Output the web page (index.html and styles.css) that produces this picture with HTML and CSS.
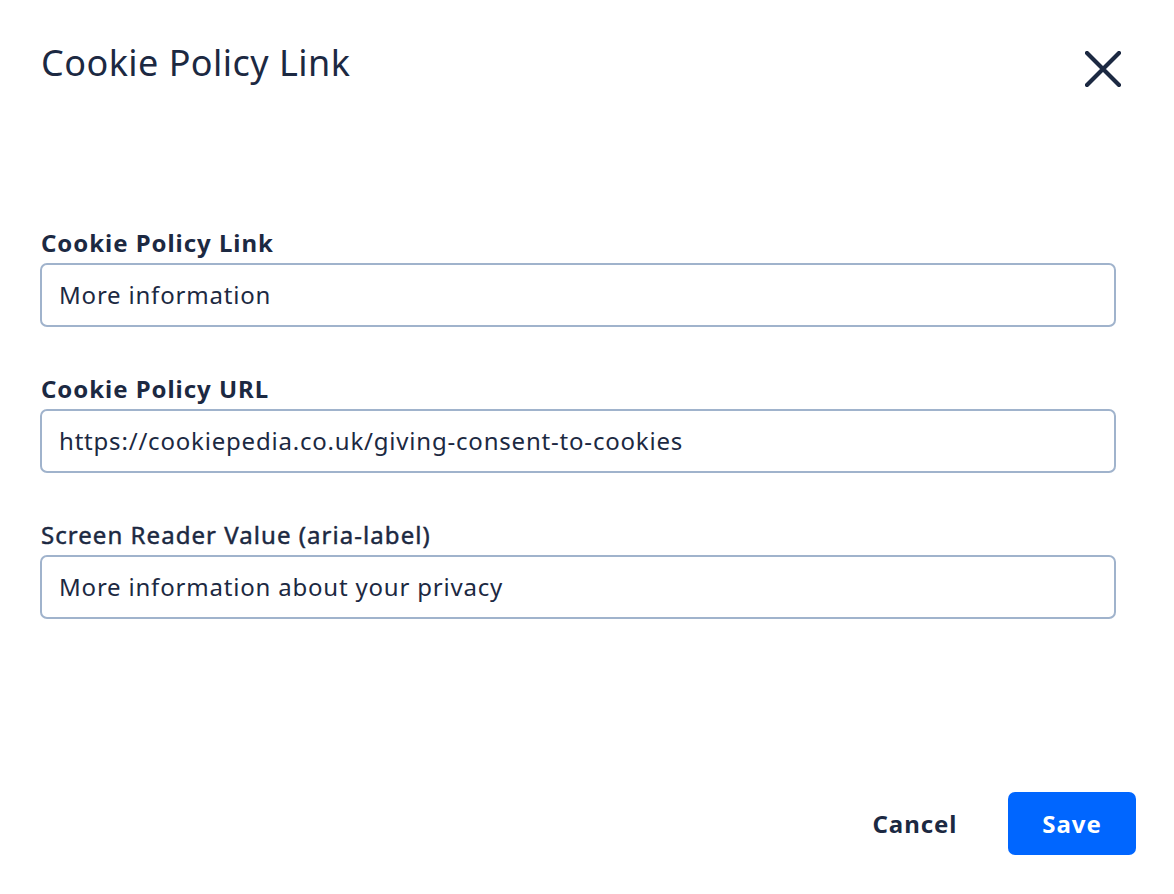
FILE: index.html
```html
<!DOCTYPE html>
<html lang="en">
<head>
<meta charset="utf-8">
<title>Cookie Policy Link</title>
<link rel="stylesheet" href="styles.css">
</head>
<body>
<div class="modal">
  <header class="modal-header">
    <h1 class="modal-title">Cookie Policy Link</h1>
    <button class="close-btn" aria-label="Close">
      <svg width="36" height="36" viewBox="0 0 36 36" fill="none">
        <path d="M2 2L34 34M34 2L2 34" stroke="#1c2942" stroke-width="4.2" stroke-linecap="round"/>
      </svg>
    </button>
  </header>
  <form class="modal-body">
    <div class="field">
      <label class="field-label bold">Cookie Policy Link</label>
      <div class="field-input">More information</div>
    </div>
    <div class="field">
      <label class="field-label bold">Cookie Policy URL</label>
      <div class="field-input">https://cookiepedia.co.uk/giving-consent-to-cookies</div>
    </div>
    <div class="field">
      <label class="field-label medium">Screen Reader Value (aria-label)</label>
      <div class="field-input">More information about your privacy</div>
    </div>
  </form>
  <footer class="modal-footer">
    <button class="btn btn-cancel">Cancel</button>
    <button class="btn btn-save">Save</button>
  </footer>
</div>
</body>
</html>
```
FILE: styles.css
```css
html, body {
  margin: 0;
  padding: 0;
  background: #ffffff;
}
body {
  font-family: "Noto Sans", "Open Sans", sans-serif;
  color: #1c2942;
}
.modal {
  width: 1174px;
  height: 894px;
  box-sizing: border-box;
  display: flex;
  flex-direction: column;
}
.modal-header {
  display: flex;
  justify-content: space-between;
  align-items: flex-start;
  padding: 39px 53px 0 41px;
}
.modal-title {
  margin: 0;
  font-size: 36px;
  line-height: 48px;
  font-weight: 400;
  letter-spacing: 0.45px;
}
.close-btn {
  margin-top: 12px;
  padding: 0;
  width: 36px;
  height: 36px;
  border: 0;
  background: none;
  display: flex;
}
.modal-body {
  display: flex;
  flex-direction: column;
  gap: 46px;
  padding: 140px 58px 0 40px;
}
.field {
  display: flex;
  flex-direction: column;
  gap: 4px;
}
.field-label {
  font-size: 24px;
  line-height: 32px;
  padding-left: 1px;
}
.field-label.bold {
  font-weight: 700;
  letter-spacing: 0.95px;
}
.field-label.medium {
  font-weight: 400;
  letter-spacing: 1.05px;
  -webkit-text-stroke: 0.45px #1c2942;
}
.field-input {
  height: 64px;
  box-sizing: border-box;
  border: 2px solid #a0b3cc;
  border-radius: 7px;
  padding: 0 17px;
  display: flex;
  align-items: center;
  font-size: 24px;
  line-height: 32px;
  letter-spacing: 0.8px;
}
.modal-footer {
  margin-top: auto;
  display: flex;
  justify-content: flex-end;
  gap: 29px;
  padding: 0 38px 39px 0;
}
.btn {
  width: 128px;
  height: 63px;
  border: 0;
  border-radius: 7px;
  font-family: "Noto Sans", "Open Sans", sans-serif;
  font-size: 24px;
  font-weight: 700;
  letter-spacing: 0.95px;
  padding: 0;
}
.btn-cancel {
  background: transparent;
  color: #1c2942;
}
.btn-save {
  background: #0066ff;
  color: #ffffff;
}
```
